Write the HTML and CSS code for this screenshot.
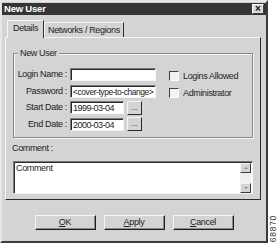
FILE: index.html
```html
<!DOCTYPE html>
<html lang="en">

<head>
    <meta charset="UTF-8">
    <title>New User</title>
    <link rel="stylesheet" href="styles.css">
</head>

<body>
    <div class="page">
        <div class="dialog">
            <div class="titlebar">
                <span class="title">New User</span>
                <span class="close">&times;</span>
            </div>

            <div class="tabs">
                <span class="tab active">Details</span>
                <span class="tab">Networks / Regions</span>
            </div>

            <div class="panel">
                <fieldset class="group">
                    <legend>New User</legend>
                    <div class="form">
                        <div class="fields">
                            <label>Login Name :</label>
                            <div class="field"><span class="input wide"></span></div>

                            <label>Password :</label>
                            <div class="field"><span class="input wide pw">&lt;cover-type-to-change&gt;</span></div>

                            <label>Start Date :</label>
                            <div class="field"><span class="input date">1999-03-04</span><span class="dots">...</span></div>

                            <label>End Date :</label>
                            <div class="field"><span class="input date">2000-03-04</span><span class="dots">...</span></div>
                        </div>
                        <div class="checks">
                            <div class="check"><span class="box"></span>Logins Allowed</div>
                            <div class="check"><span class="box"></span>Administrator</div>
                        </div>
                    </div>
                </fieldset>

                <div class="comment-label">Comment :</div>
                <div class="memo">
                    <div class="memo-text">Comment</div>
                    <div class="scroll">
                        <span class="arrow up"></span>
                        <span class="track"></span>
                        <span class="arrow down"></span>
                    </div>
                </div>
            </div>

            <div class="buttons">
                <span class="btn"><u>O</u>K</span>
                <span class="btn"><u>A</u>pply</span>
                <span class="btn"><u>C</u>ancel</span>
            </div>
        </div>
        <div class="side"><span class="code">68870</span></div>
    </div>
</body>

</html>
```

FILE: styles.css
```css
* {
    margin: 0;
    padding: 0;
    box-sizing: border-box;
}

body {
    width: 278px;
    height: 244px;
    background: #fff;
    font-family: "Liberation Sans", Arial, sans-serif;
    font-size: 9px;
    letter-spacing: -0.35px;
    color: #222;
}

.page {
    display: flex;
    height: 244px;
}

.dialog {
    width: 270px;
    height: 243px;
    background: #d4d4d4;
    border: 2px solid;
    border-color: #e6e6e6 #3c3c3c #3c3c3c #e6e6e6;
    display: flex;
    flex-direction: column;
}

/* title bar */
.titlebar {
    height: 12px;
    margin-top: 1px;
    background: #353535;
    display: flex;
    align-items: center;
    justify-content: space-between;
    padding: 0 2px;
}

.title {
    color: #fff;
    font-weight: bold;
    font-size: 9.5px;
    letter-spacing: -0.2px;
    line-height: 12px;
}

.close {
    width: 12px;
    height: 10px;
    background: #dadada;
    border: 1px solid;
    border-color: #fff #404040 #404040 #fff;
    font: bold 10px/8px "Liberation Sans", Arial, sans-serif;
    letter-spacing: 0;
    color: #111;
    text-align: center;
}

/* tabs */
.tabs {
    display: flex;
    align-items: flex-end;
    height: 17px;
    margin: 5px 0 0 5px;
    position: relative;
    z-index: 1;
}

.tab {
    height: 15px;
    line-height: 14px;
    padding: 0 3px;
    border: 1px solid;
    border-bottom: 0;
    border-color: #f4f4f4 #2e2e2e transparent #f4f4f4;
    background: #d4d4d4;
}

.tab.active {
    height: 18px;
    margin-bottom: -1px;
    line-height: 15px;
    padding: 0 5px;
}

/* panel */
.panel {
    width: 256px;
    height: 163px;
    margin-left: 3px;
    border: 1px solid;
    border-color: #f4f4f4 #2a2a2a #2a2a2a #f4f4f4;
    padding: 0 6px;
}

.group {
    margin: 10px 1px 0 1px;
    border: 1px solid #8a8a8a;
    box-shadow: inset 1px 1px 0 #f4f4f4, 1px 1px 0 #f4f4f4;
    padding: 0 0 0 1px;
    min-width: 0;
}

.group legend {
    margin-left: 3px;
    padding: 0 2px;
    line-height: 11px;
    background: #d4d4d4;
}

.form {
    display: flex;
    padding: 9px 0 6px 0;
}

.fields {
    display: grid;
    grid-template-columns: 52px 86px;
    grid-auto-rows: 13px;
    column-gap: 3px;
    row-gap: 3.5px;
}

.fields label {
    text-align: right;
    line-height: 13px;
    white-space: nowrap;
}

.field {
    display: flex;
    align-items: center;
}

.input {
    height: 13px;
    background: #fff;
    border: 1px solid;
    border-color: #7a7a7a #f4f4f4 #f4f4f4 #7a7a7a;
    box-shadow: inset 1px 1px 0 #2a2a2a;
    padding-left: 2px;
    line-height: 12px;
    letter-spacing: -0.5px;
    white-space: nowrap;
    overflow: hidden;
}

.wide {
    width: 86px;
}

.pw {
    font-size: 8.5px;
    letter-spacing: -0.45px;
}

.date {
    width: 54px;
}

.dots {
    width: 15px;
    height: 14px;
    margin-left: 3px;
    border: 1px solid;
    border-color: #f4f4f4 #2a2a2a #2a2a2a #f4f4f4;
    line-height: 11px;
    text-align: center;
    font-size: 8px;
    letter-spacing: 0;
}

.checks {
    margin-left: 13px;
    display: flex;
    flex-direction: column;
    gap: 4px;
}

.check {
    display: flex;
    align-items: center;
    height: 13px;
    padding-top: 2px;
    white-space: nowrap;
}

.box {
    width: 10px;
    height: 10px;
    margin-right: 4px;
    background: #f2f2f2;
    border: 1px solid;
    border-color: #404040 #fff #fff #404040;
}

/* comment */
.comment-label {
    margin-top: 5px;
    line-height: 11px;
}

.memo {
    display: flex;
    height: 33px;
    margin: 7px 1px 0 1px;
    background: #fff;
    border: 1px solid;
    border-color: #7a7a7a #f4f4f4 #f4f4f4 #7a7a7a;
    box-shadow: inset 1px 1px 0 #2a2a2a;
}

.memo-text {
    flex: 1;
    padding: 1px 2px;
    line-height: 11px;
}

.scroll {
    width: 11px;
    margin: 1px 1px 0 0;
    display: flex;
    flex-direction: column;
}

.track {
    flex: 1;
    background: #efefef;
}

.arrow {
    height: 10px;
    background: #d4d4d4;
    border: 1px solid;
    border-color: #f4f4f4 #3a3a3a #3a3a3a #f4f4f4;
    display: flex;
    align-items: center;
    justify-content: center;
}

.arrow::after {
    content: "";
    border-left: 2px solid transparent;
    border-right: 2px solid transparent;
}

.up::after {
    border-bottom: 2px solid #8a8a8a;
}

.down::after {
    border-top: 2px solid #8a8a8a;
}

/* buttons */
.buttons {
    display: flex;
    justify-content: center;
    gap: 8px;
    margin-top: 15px;
}

.btn {
    width: 61px;
    height: 15px;
    border: 1px solid;
    border-color: #f4f4f4 #1e1e1e #1e1e1e #f4f4f4;
    box-shadow: inset -1px -1px 0 #8a8a8a;
    text-align: center;
    line-height: 13px;
}

/* figure number */
.side {
    flex: 1;
    display: flex;
    align-items: flex-end;
    justify-content: center;
    padding-bottom: 2px;
}

.code {
    writing-mode: vertical-rl;
    transform: rotate(180deg);
    font: 8.5px "Liberation Sans", Arial, sans-serif;
    letter-spacing: 0.7px;
    color: #333;
}
```
